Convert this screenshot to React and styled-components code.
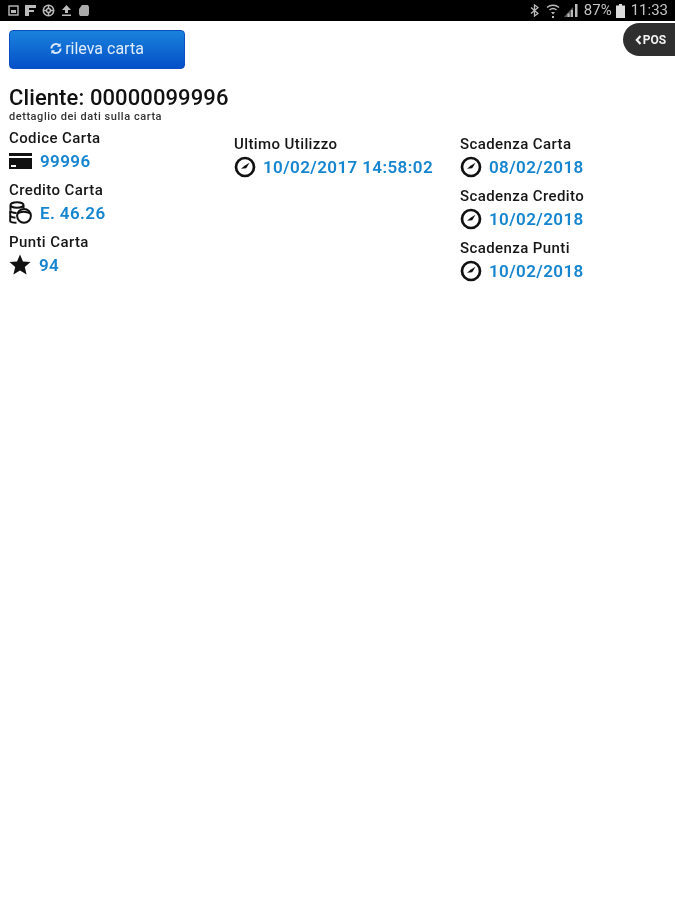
import React from "react";
import styled, { createGlobalStyle } from "styled-components";

const Global = createGlobalStyle`
  html, body { margin: 0; padding: 0; background: #fff; }
  body { font-family: Roboto, "Noto Sans", sans-serif; color: #111; }
`;

const Page = styled.div`
  width: 675px;
  height: 900px;
  position: relative;
  overflow: hidden;
  background: #fff;
  filter: blur(0.45px);
`;

const StatusBar = styled.div`
  height: 21px;
  background: #000;
  display: flex;
  align-items: center;
  justify-content: space-between;
  padding: 0 7px 0 8px;
  color: #c9c9c9;
`;

const StatusGroup = styled.div`
  display: flex;
  align-items: center;
  gap: ${(p) => p.$gap || 0}px;
`;

const StatusText = styled.span`
  font-size: 15px;
  line-height: 21px;
  color: #c4c4c4;
  margin-left: ${(p) => p.$left || 0}px;
`;

const StatusIcon = styled.svg`
  flex: none;
  margin-left: ${(p) => p.$left || 0}px;
`;

const Content = styled.main`
  padding: 9px 9px 0;
`;

const ScanButton = styled.button`
  width: 176px;
  height: 39px;
  display: flex;
  align-items: center;
  justify-content: center;
  gap: 3px;
  padding: 0 0 3px;
  border: 1px solid #0b4fc0;
  border-radius: 4px;
  background: linear-gradient(#1a82dc, #0450c8);
  color: #dfecfa;
  font-family: Roboto, sans-serif;
  font-size: 16px;
`;

const Title = styled.h1`
  margin: 16px 0 0;
  font-size: 22px;
  line-height: 26px;
  font-weight: 500;
  letter-spacing: 0.1px;
  color: #111;
`;

const Subtitle = styled.p`
  margin: -1px 0 0;
  font-size: 11px;
  line-height: 13px;
  font-weight: 500;
  letter-spacing: 0.55px;
  color: #333;
`;

const Columns = styled.div`
  display: grid;
  grid-template-columns: 225px 226px 1fr;
  margin-top: 6px;
`;

const Column = styled.div`
  display: flex;
  flex-direction: column;
  gap: 7px;
  padding-top: ${(p) => p.$top || 0}px;
`;

const Field = styled.div`
  display: flex;
  flex-direction: column;
`;

const Label = styled.div`
  font-size: 15px;
  line-height: 18px;
  font-weight: 500;
  letter-spacing: 0.4px;
  color: #161616;
`;

const ValueRow = styled.div`
  display: flex;
  align-items: center;
  gap: ${(p) => p.$gap || 7}px;
  height: 27px;
`;

const Value = styled.span`
  font-size: 17px;
  line-height: 24px;
  font-weight: 600;
  letter-spacing: 0.4px;
  color: #1585d0;
  white-space: nowrap;
`;

const PosTab = styled.div`
  position: absolute;
  top: 23px;
  right: 0;
  width: 52px;
  height: 33px;
  display: flex;
  align-items: center;
  justify-content: center;
  gap: 1px;
  padding-left: 3px;
  box-sizing: border-box;
  background: #2f2f2f;
  border-radius: 17px 0 0 17px;
  color: #f2f2f2;
  font-size: 12px;
  font-weight: 700;
`;

const Clock = () => (
  <svg width="22" height="22" viewBox="0 0 22 22" fill="none" stroke="#111">
    <circle cx="11" cy="11" r="9" strokeWidth="2.7" />
    <path d="M7 12.800 L10.500 9.800 L15.500 6.800 L12.200 12.300 Z" fill="#111" stroke="none" />
  </svg>
);

const CardIcon = () => (
  <svg width="23" height="16" viewBox="0 0 23 16" fill="#111">
    <rect x="0" y="0" width="23" height="3" />
    <path d="M0 5h23v11H0z M2 12v2h5v-2z" fillRule="evenodd" />
  </svg>
);

const CoinsIcon = () => (
  <svg width="23" height="23" viewBox="0 0 23 23" fill="none" stroke="#111" strokeWidth="2">
    <ellipse cx="8" cy="4" rx="6.500" ry="2.800" />
    <path d="M1.500 4.500v5M14.500 4.500v2.500" />
    <path d="M1.500 9.500c0 1.300 2.500 2.300 6 2.500" />
    <path d="M1.200 10v10c0 1 2 1.800 6.300 1.800" />
    <path d="M1.200 15c1 1 2.800 1.500 5.300 1.700" />
    <circle cx="15" cy="14.800" r="6.900" fill="#fff" />
    <path d="M8.500 12.500c3-2.500 9-2.500 13 0" />
  </svg>
);

const StarIcon = () => (
  <svg width="22" height="21" viewBox="0 0 22 21" fill="#111">
    <path d="M11 0.500l3 7 7.500.6-5.700 4.900 1.800 7.400L11 16.500l-6.600 3.900 1.800-7.400L.5 8.100 8 7.500z" />
  </svg>
);

const RefreshIcon = () => (
  <svg width="12" height="13" viewBox="0 0 13 14" fill="none" stroke="#dfecfa" strokeWidth="2">
    <path d="M1.500 7a5 5 0 0 1 8.500-3.500" />
    <path d="M11.500 7a5 5 0 0 1-8.500 3.500" />
    <path d="M11.500 1v4h-4z" fill="#dfecfa" stroke="none" />
    <path d="M1.500 13V9h4z" fill="#dfecfa" stroke="none" />
  </svg>
);

const Chevron = () => (
  <svg width="7" height="10" viewBox="0 0 7 10" fill="none" stroke="#f2f2f2" strokeWidth="2.200">
    <path d="M5.500 1 L1.800 5 L5.500 9" />
  </svg>
);

const StatusLeft = () => (
  <StatusGroup $gap={6}>
    <svg width="11" height="11" viewBox="0 0 11 11" fill="none" stroke="#bbb" strokeWidth="1.400">
      <rect x="1" y="1" width="9" height="9" />
      <rect x="3" y="5" width="5" height="3" fill="#bbb" stroke="none" />
    </svg>
    <svg width="11" height="11" viewBox="0 0 11 11" fill="#bbb">
      <path d="M0 0h11v3H4v2h5v2H4v4H0z" />
    </svg>
    <svg width="13" height="13" viewBox="0 0 13 13" fill="none" stroke="#bbb" strokeWidth="1.500">
      <circle cx="6.500" cy="6.500" r="5.200" />
      <circle cx="6.500" cy="6.500" r="2" />
      <path d="M6.500 1v3.500M6.500 8.500V12M1 6.500h3.500M8.500 6.500H12" />
    </svg>
    <svg width="11" height="11" viewBox="0 0 11 11" fill="#bbb">
      <path d="M5.500 0L10 5H7v3H4V5H1zM1 9.500h9V11H1z" />
    </svg>
    <svg width="12" height="11" viewBox="0 0 12 11" fill="#aaa">
      <path d="M4 0h6l1 2v7l-1 2H2L1 9V4z" />
    </svg>
  </StatusGroup>
);

const StatusRight = () => (
  <StatusGroup>
    <StatusIcon width="9" height="13" viewBox="0 0 9 13" fill="none" stroke="#bbb" strokeWidth="1.300">
      <path d="M1 3.500l7 6L4.500 12V1L8 3.500l-7 6" />
    </StatusIcon>
    <StatusIcon $left={7} width="14" height="14" viewBox="0 0 14 14" fill="none" stroke="#bbb" strokeWidth="1.400">
      <path d="M1 3.500c3.500-3 8.500-3 12 0M3.500 6c2-1.700 5-1.700 7 0" />
      <path d="M5 8l2 2.500L9 8zM6 12h2v2H6z" fill="#bbb" stroke="none" />
    </StatusIcon>
    <StatusIcon $left={4} width="14" height="13" viewBox="0 0 14 13" fill="#bbb">
      <path d="M0 13L9 3v10z" opacity="0.5" />
      <path d="M11 0h2.500v13H11z" />
      <path d="M7 6h2v7H7zM3.500 9.500h2V13h-2z" />
    </StatusIcon>
    <StatusText $left={6}>87%</StatusText>
    <StatusIcon $left={4} width="9" height="14" viewBox="0 0 9 14" fill="#ddd">
      <path d="M3 0h3v1.500h3V14H0V1.500h3z" />
    </StatusIcon>
    <StatusText $left={6}>11:33</StatusText>
  </StatusGroup>
);

const Item = ({ label, icon, value, gap }) => (
  <Field>
    <Label>{label}</Label>
    <ValueRow $gap={gap}>
      {icon}
      <Value>{value}</Value>
    </ValueRow>
  </Field>
);

export default function App() {
  return (
    <Page>
      <Global />
      <StatusBar>
        <StatusLeft />
        <StatusRight />
      </StatusBar>
      <PosTab>
        <Chevron />
        POS
      </PosTab>
      <Content>
        <ScanButton>
          <RefreshIcon />
          rileva carta
        </ScanButton>
        <Title>Cliente: 00000099996</Title>
        <Subtitle>dettaglio dei dati sulla carta</Subtitle>
        <Columns>
          <Column>
            <Item label="Codice Carta" icon={<CardIcon />} value="99996" gap={8} />
            <Item label="Credito Carta" icon={<CoinsIcon />} value="E. 46.26" gap={8} />
            <Item label="Punti Carta" icon={<StarIcon />} value="94" gap={8} />
          </Column>
          <Column $top={6}>
            <Item label="Ultimo Utilizzo" icon={<Clock />} value="10/02/2017 14:58:02" />
          </Column>
          <Column $top={6}>
            <Item label="Scadenza Carta" icon={<Clock />} value="08/02/2018" />
            <Item label="Scadenza Credito" icon={<Clock />} value="10/02/2018" />
            <Item label="Scadenza Punti" icon={<Clock />} value="10/02/2018" />
          </Column>
        </Columns>
      </Content>
    </Page>
  );
}
